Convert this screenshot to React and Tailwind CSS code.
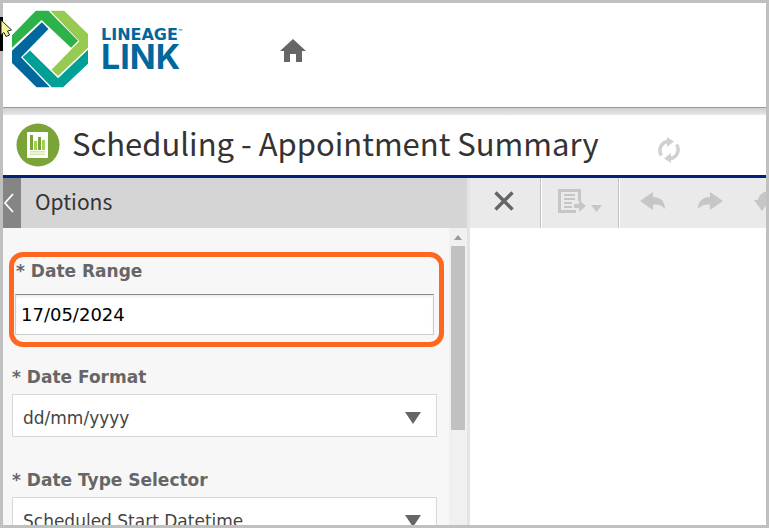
import { useState } from "react";

const DATE_FORMATS = ["dd/mm/yyyy", "mm/dd/yyyy", "yyyy-mm-dd"];
const DATE_TYPES = ["Scheduled Start Datetime", "Scheduled End Datetime", "Created Datetime"];

const Logo = () => (
    <a href="#home" className="flex items-center gap-3 text-[#00689d]">
        <svg viewBox="36 28 233 235" className="h-[78px] w-[78px]" aria-hidden="true">
            <path fill="#2db24a" d="M38 142V104L110 30H148L237 121L216 142L127 58Z" />
            <path fill="#97ca50" d="M154 30H195L267 100V142L177 227L157 208L241 122Z" />
            <path fill="#00a096" d="M92 150L177 234L267 148V190L192 261H158L70 170Z" />
            <path fill="#00689d" d="M128 65L148 85L65 170L152 261H112L38 188V151Z" />
        </svg>
        <span className="flex flex-col">
            <span className="flex font-['DejaVu_Sans',sans-serif] text-[16px] leading-4 font-bold">
                LINEAGE<span className="text-[5px] leading-[8px]">™</span>
            </span>
            <span className="font-[Inter,sans-serif] text-[34px] leading-7 font-bold">LINK</span>
        </span>
    </a>
);

const Header = () => (
    <header className="flex h-[104px] shrink-0 items-start pt-[7px] pl-2">
        <Logo />
        <button type="button" aria-label="Home" className="mt-7 ml-24">
            <svg viewBox="0 0 28 26" className="h-[26px] w-7" fill="#666">
                <path d="M14 1L27 13H23V24H17V16H11V24H5V13H1Z" />
            </svg>
        </button>
    </header>
);

const TitleBar = () => (
    <div className="flex h-[63px] shrink-0 items-center border-b-[3px] border-[#00237d] bg-white pl-[13px]">
        <svg viewBox="0 0 44 44" className="h-11 w-11 shrink-0" aria-hidden="true">
            <circle cx="22" cy="22" r="21.500" fill="#7aa338" />
            <rect x="11" y="9" width="21" height="26" rx="1" fill="#fff" />
            <path fill="#7aa338" d="M14 12h3v15h-3zM22 14h3v13h-3z" />
            <path fill="#9fd14c" d="M18 18h3v9h-3zM26 17h3v10h-3z" />
            <path fill="#d3e8af" d="M14 28h15v1.500H14zM14 30.500h15V32H14z" />
        </svg>
        <h1 className="ml-3 pb-1 text-[31px] leading-10 whitespace-nowrap text-[#333]">
            Scheduling - Appointment Summary
        </h1>
        <button type="button" aria-label="Refresh" className="mt-[10px] ml-[58px]">
            <svg viewBox="0 0 24 26" className="h-[26px] w-6" fill="none" stroke="#d0d0d0" strokeWidth="3.500">
                <path d="M4.500 18.500A9 9 0 0 1 10.500 4.500" />
                <path d="M19.500 7.500A9 9 0 0 1 13.500 21.500" />
                <path d="M10 0L17 4.500L10 10ZM14 16L7 21.500L14 26Z" fill="#d0d0d0" stroke="none" />
            </svg>
        </button>
    </div>
);

const SelectField = ({ id, label, options, className }) => {
    const [value, setValue] = useState(options[0]);

    return (
        <div className={`mr-[7px] ml-[3px] flex flex-col gap-[5px] ${className}`}>
            <label htmlFor={id} className="text-[17px] leading-6 font-bold text-[#666]">
                * {label}
            </label>
            <div className="relative">
                <select
                    id={id}
                    value={value}
                    onChange={(e) => setValue(e.target.value)}
                    className="h-[43px] w-full appearance-none border border-[#d8d8d8] bg-white pt-[6px] pl-[10px] text-[17px] text-[#444] outline-none"
                >
                    {options.map((option) => (
                        <option key={option}>{option}</option>
                    ))}
                </select>
                <svg viewBox="0 0 16 12" className="pointer-events-none absolute top-[18px] right-4 h-3 w-4" fill="#666">
                    <path d="M0 0H16L8 12Z" />
                </svg>
            </div>
        </div>
    );
};

const OptionsPanel = () => {
    const [dateRange, setDateRange] = useState("17/05/2024");

    return (
        <aside className="flex min-h-0 min-w-0 flex-col">
            <div className="flex h-[50px] shrink-0 items-center bg-[#d5d5d5]">
                <button type="button" aria-label="Collapse options" className="flex h-full w-[18px] items-center bg-[#858585]">
                    <svg viewBox="0 0 12 20" className="h-5 w-3" fill="none" stroke="#fff" strokeWidth="1.800">
                        <path d="M10 1L2 10L10 19" />
                    </svg>
                </button>
                <h2 className="ml-[14px] pb-1 text-[21px] leading-8 text-[#333]">Options</h2>
            </div>

            <div className="flex min-h-0 grow bg-[#f7f7f7]">
                <form className="flex min-w-0 grow flex-col overflow-hidden pt-6 pr-[5px] pl-[6px] font-[Verdana,'DejaVu_Sans',sans-serif]">
                    {/* Highlighted field */}
                    <div className="flex flex-col gap-[11px] rounded-[14px] border-[5px] border-[#ff671f] pt-[2px] pr-[5px] pb-[7px] pl-px">
                        <label htmlFor="date-range" className="pl-px text-[17px] leading-6 font-bold text-[#666]">
                            * Date Range
                        </label>
                        <input
                            id="date-range"
                            type="text"
                            value={dateRange}
                            onChange={(e) => setDateRange(e.target.value)}
                            className="h-[41px] w-full border border-[#ccc] border-t-[#888] bg-white pl-[5px] text-[18px] text-black shadow-[inset_0_2px_3px_#eee] outline-none"
                        />
                    </div>
                    <SelectField id="date-format" label="Date Format" options={DATE_FORMATS} className="mt-[18px]" />
                    <SelectField id="date-type" label="Date Type Selector" options={DATE_TYPES} className="mt-[31px]" />
                </form>

                {/* Scrollbar */}
                <div className="flex w-[18px] shrink-0 flex-col items-center bg-[#f0f0f0]">
                    <svg viewBox="0 0 8 18" className="h-[18px] w-2 shrink-0" fill="#999">
                        <path d="M0 12L4 7L8 12Z" />
                    </svg>
                    <div className="h-[62%] w-[14px] bg-[#c1c1c1]" />
                </div>
            </div>
        </aside>
    );
};

const Toolbar = () => (
    <div className="flex h-[50px] items-center overflow-hidden bg-[#eaeaea]">
        <button type="button" aria-label="Close" className="flex h-full w-[71px] shrink-0 items-center justify-center border-r border-[#c2c2c2] pr-[2px] pb-1">
            <svg viewBox="0 0 20 20" className="h-5 w-5" fill="none" stroke="#666" strokeWidth="3.400">
                <path d="M1.500 1.500L18.500 18.500M18.500 1.500L1.500 18.500" />
            </svg>
        </button>
        <button type="button" aria-label="Export" className="flex h-full w-[78px] shrink-0 items-center justify-center border-r border-l border-r-[#c2c2c2] border-l-white pb-1">
            <svg viewBox="0 0 44 26" className="h-[26px] w-11" fill="#c6c6c6">
                <path d="M0 1H23V13H20V4H3V22H18V25H0Z" />
                <path d="M6 6H17V8H6ZM6 10H17V12H6ZM6 14H14V16H6ZM6 18H14V20H6Z" />
                <path d="M16 16H21V12L28 18L21 24V20H16Z" />
                <path d="M33 17H44L38.500 24Z" />
            </svg>
        </button>
        <div className="flex h-full shrink-0 items-center gap-[31px] border-l border-white pb-1 pl-5">
            <button type="button" aria-label="Undo">
                <svg viewBox="0 0 26 20" className="h-5 w-[26px]" fill="#c6c6c6">
                    <path d="M0 10L13 1V6C20 6 25 10 25 18C22 14 18 13 13 13.500V19Z" />
                </svg>
            </button>
            <button type="button" aria-label="Redo">
                <svg viewBox="0 0 26 20" className="h-5 w-[26px]" fill="#c6c6c6">
                    <path d="M26 10L13 1V6C6 6 1 10 1 18C4 14 8 13 13 13.500V19Z" />
                </svg>
            </button>
            <button type="button" aria-label="Revert">
                <svg viewBox="0 0 26 20" className="h-5 w-[26px]" fill="#c6c6c6">
                    <path d="M0 9H4C5 3 10 0 16 0C22 0 26 4 26 9H21C20 6 18 5 16 5C13 5 12 6 12 9H16L8 20Z" />
                </svg>
            </button>
        </div>
    </div>
);

export default function App() {
    return (
        <div className="flex h-screen flex-col overflow-hidden border-[3px] border-[#c0c0c0] bg-white font-['Noto_Sans_CJK_SC',sans-serif]">
            <Header />
            <div className="h-2 shrink-0 border-t border-[#999] bg-linear-to-b from-[#cfcfcf] to-[#e8e8e8]" />
            <TitleBar />
            <div className="grid min-h-0 grow grid-cols-[464fr_299fr]">
                <OptionsPanel />
                <main className="min-w-0 border-l-[3px] border-[#e4e4e4] bg-white">
                    <Toolbar />
                </main>
            </div>

            {/* Mouse pointer */}
            <div className="pointer-events-none absolute top-[17px] left-0 flex">
                <svg viewBox="0 0 12 34" className="h-[34px] w-3" aria-hidden="true">
                    <path d="M0 0H3V34H0Z" />
                    <path d="M1 3L11.500 13L7.500 14L9.500 18L6 19.500L4 15.500L1 18Z" fill="#f6f39a" stroke="#222" strokeWidth="1" />
                </svg>
            </div>
        </div>
    );
}
